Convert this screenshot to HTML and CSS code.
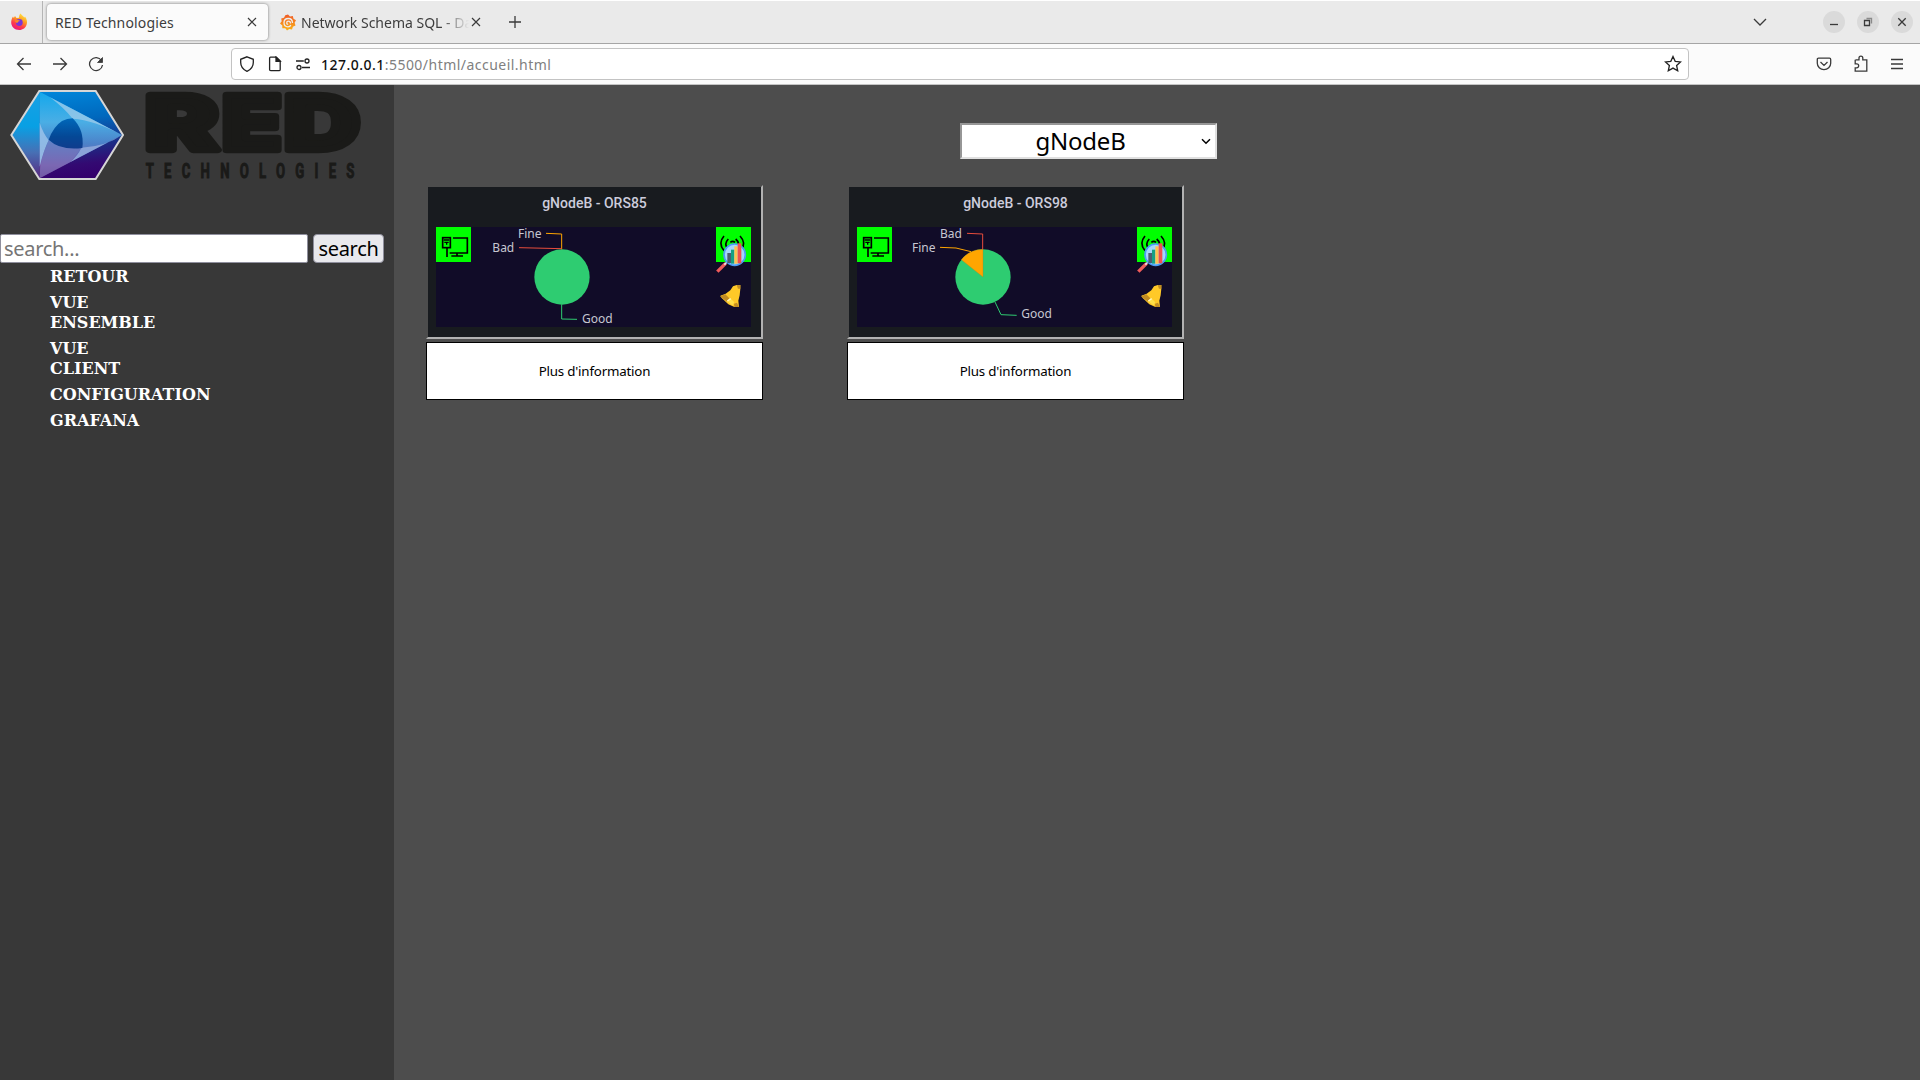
FILE: index.html
```html
<!DOCTYPE html>
<html lang="fr">
<head>
<meta charset="utf-8">
<title>RED Technologies</title>
<link rel="stylesheet" href="styles.css">
</head>
<body>
<svg width="0" height="0" class="defs">
  <defs>
    <g id="pc-icon">
      <rect x="48" y="141" width="105" height="105" fill="#0f0"/>
      <path d="M99 174H142V219H89M81 204V231M111 219V228M94 228H129" fill="none" stroke="#000" stroke-width="5"/>
      <rect x="68" y="173" width="23" height="30" fill="none" stroke="#000" stroke-width="5"/>
      <path d="M71 180H88M73 187H86M80 187V194" fill="none" stroke="#000" stroke-width="4"/>
    </g>
    <g id="radio-icon">
      <rect x="888" y="141" width="105" height="105" fill="#0f0"/>
      <path d="M912 168Q893 190 912 212M925 177Q912 190 922 206M960 168Q981 190 962 212M947 177Q962 190 951 206M931 187q7-6 14 0" fill="none" stroke="#000" stroke-width="5"/>
      <path d="M917 250L892 275" stroke="#f05b5b" stroke-width="10"/>
      <path d="M921 246L913 254" stroke="#e8eaf0" stroke-width="5"/>
      <circle cx="944" cy="224" r="32" fill="#a5d6fb" stroke="#4b9bf5" stroke-width="5"/>
      <path d="M922 219h11v30h-11z" fill="#4d5d70"/>
      <path d="M933 209h10v42h-10z" fill="#16a085"/>
      <path d="M943 199h10v52h-10z" fill="#ffc250"/>
      <path d="M953 190h11v60h-11z" fill="#ef5050"/>
    </g>
    <g id="bell-icon">
      <path d="M950 315h11v11l-2 20-4 16 2 19h-14l-18-8-20-19-4-7 16-6 14-10 8-12z" fill="#ffc928"/>
      <path d="M950 315h11v11h-7zM900 349l16-6 12 12-7 10zM942 371l9-3 6 13h-14z" fill="#c28d22"/>
      <path d="M921 363l10-8 12 12-6 9z" fill="#ffe04a"/>
      <path d="M922 363l10-7" stroke="#fff6c8" stroke-width="4"/>
    </g>
  </defs>
</svg>

<header class="browser">
  <div class="tabbar">
    <div class="pinned">
      <svg width="18" height="18" viewBox="0 0 18 18">
        <defs>
          <linearGradient id="fox" x1=".8" y1="0" x2=".3" y2="1"><stop offset="0" stop-color="#fff04a"/><stop offset=".4" stop-color="#ff9a1f"/><stop offset=".7" stop-color="#ff3b4a"/><stop offset="1" stop-color="#e81580"/></linearGradient>
        </defs>
        <path d="M10.500 0.500C11.500 2 13 3 14.500 4.500L15 3.500C17 6 17.300 9 16.800 11C16 14.800 12.900 17 9.200 17C4.500 17 1.200 13.500 1.200 9.500C1.200 7 2 5 3 3.500L3.800 5L5 3L6.500 5L9 4.800C9 3 9.500 1.500 10.500 .5Z" fill="url(#fox)"/>
        <circle cx="9.300" cy="9.500" r="3.400" fill="#7a35d8"/>
        <path d="M5 7.500C7 6.500 9 7 10 8C8.500 8.500 7.500 8.500 7.500 10C6 10 5 9 5 7.500Z" fill="#ff8b25"/>
      </svg>
    </div>
    <div class="tab active">
      <span class="tab-title t1">RED Technologies</span>
      <svg class="x" width="10" height="10" viewBox="0 0 10 10"><path d="M1 1L9 9M9 1L1 9"/></svg>
    </div>
    <div class="tab second">
      <svg width="16" height="17" viewBox="0 0 16 17">
        <defs><linearGradient id="graf" x1="0" y1="0" x2="0" y2="1"><stop offset="0" stop-color="#f05a28"/><stop offset="1" stop-color="#fbb516"/></linearGradient></defs>
        <path d="M8 .5L10 2.500L12.800 2L13.500 4.800L16 6.300L14.600 8.800L15.500 11.500L12.900 12.800L12 15.500L9.300 14.900L7 16.500L5.300 14.300L2.300 14.200L2.300 11.400L0 9.500L1.700 7.300L1.200 4.500L4 3.800L5.300 1.300Z" fill="url(#graf)"/>
        <path d="M12.500 9C12.500 6 10.500 4.500 8.300 4.500C5.500 4.500 4 6.500 4 8.800C4 11.200 5.800 12.800 8 12.800C9.500 12.800 10.500 12 10.800 11M10.500 9.500C10.500 8 9.500 7.200 8.500 7.200C7.300 7.200 6.700 8 6.700 8.900C6.700 9.800 7.400 10.300 8.200 10.300" fill="none" stroke="#eee" stroke-width="1.300"/>
      </svg>
      <span class="tab-title t2">Network Schema SQL - Da</span>
      <svg class="x" width="10" height="10" viewBox="0 0 10 10"><path d="M1 1L9 9M9 1L1 9"/></svg>
    </div>
    <svg class="plus" width="12" height="12" viewBox="0 0 12 12"><path d="M6 0V12M0 6H12"/></svg>
    <div class="window-controls">
      <svg class="chev" width="14" height="8" viewBox="0 0 14 8"><path d="M1 1L7 7L13 1"/></svg>
      <span class="wc"><svg width="10" height="10" viewBox="0 0 10 10"><path d="M1 7.500H9"/></svg></span>
      <span class="wc"><svg width="10" height="10" viewBox="0 0 10 10"><path d="M1.500 3.500H6.500V8.500H1.500Z"/><path d="M3.500 1.500H8.500V6.500" opacity=".5"/></svg></span>
      <span class="wc"><svg width="10" height="10" viewBox="0 0 10 10"><path d="M1.300 1.300L8.700 8.700M8.700 1.300L1.300 8.700"/></svg></span>
    </div>
  </div>
  <div class="navbar">
    <div class="nav-buttons">
      <svg width="16" height="16" viewBox="0 0 16 16"><path d="M15 8H1.500M7.500 2L1.500 8L7.500 14"/></svg>
      <svg width="16" height="16" viewBox="0 0 16 16"><path d="M1 8H14.500M8.500 2L14.500 8L8.500 14"/></svg>
      <svg width="16" height="16" viewBox="0 0 16 16"><path d="M13.500 4.500A6.500 6.500 0 1 0 14.500 9"/><path d="M14.500 1.500V6.500H9.500Z" fill="#3a3a3a" stroke-width=".8"/></svg>
    </div>
    <div class="urlbar">
      <svg width="16" height="16" viewBox="0 0 16 16"><path d="M8 .8L14.300 3.300V6.500C14.300 10.500 12 13.500 8 15.300C4 13.500 1.700 10.500 1.700 6.500V3.300Z"/></svg>
      <svg width="16" height="16" viewBox="0 0 16 16"><path d="M3.500 1.200H9.300L13.200 5V13.500Q13.200 14.700 12 14.700H3.800Q2.600 14.700 2.600 13.500V2.200Q2.600 1.200 3.500 1.200Z"/><path d="M9 1.200V5.300H13.200Z" fill="#222"/></svg>
      <svg width="16" height="16" viewBox="0 0 16 16"><path d="M1 5H8.800M7 11.500H15"/><circle cx="12" cy="5" r="2"/><circle cx="4" cy="11.500" r="2"/></svg>
      <span class="url"><b>127.0.0.1</b>:5500/html/accueil.html</span>
      <svg class="star" width="18" height="18" viewBox="0 0 18 18"><path d="M9 1.500L11.200 6.300L16.500 6.900L12.600 10.500L13.700 15.800L9 13.100L4.300 15.800L5.400 10.500L1.500 6.900L6.800 6.300Z"/></svg>
    </div>
    <div class="nav-actions">
      <svg width="16" height="16" viewBox="0 0 16 16"><path d="M2.500 2.200H13.500Q14.700 2.200 14.700 3.400V7.300A6.700 6.400 0 0 1 1.300 7.300V3.400Q1.300 2.200 2.500 2.200ZM4.500 6L8 9.400L11.500 6"/></svg>
      <svg width="16" height="18" viewBox="0 0 16 18"><path d="M2.500 4.800H6V3A1.900 1.900 0 0 1 9.800 3V4.800H13.800V16.200H2.200V12.800H3.700A2 2 0 0 0 3.700 8.800H2.200V4.800"/></svg>
      <svg width="14" height="12" viewBox="0 0 14 12"><path d="M1 1.500H13M1 6H13M1 10.500H13"/></svg>
    </div>
  </div>
</header>

<div class="page">
  <aside class="sidebar">
    <svg class="logo" width="394" height="149" viewBox="0 15 1182 447" role="img">
      <defs>
        <linearGradient id="hex" x1=".35" y1="0" x2=".5" y2="1"><stop offset="0" stop-color="#0086da"/><stop offset=".35" stop-color="#0068bd"/><stop offset=".65" stop-color="#1c2d86"/><stop offset=".85" stop-color="#330a72"/><stop offset="1" stop-color="#34006c"/></linearGradient>
        <linearGradient id="left" x1="0" y1="0" x2="0" y2="1"><stop offset="0" stop-color="#18a0e4"/><stop offset=".4" stop-color="#08a0e4"/><stop offset=".7" stop-color="#4770b5"/><stop offset="1" stop-color="#58277f"/></linearGradient>
        <linearGradient id="tri" x1="0" y1="0" x2="0" y2="1"><stop offset="0" stop-color="#12a8ec"/><stop offset=".35" stop-color="#4aaee5"/><stop offset=".6" stop-color="#4c82c9"/><stop offset=".85" stop-color="#7a55a8"/><stop offset="1" stop-color="#69398d"/></linearGradient>
        <linearGradient id="eye" x1="0" y1="0" x2="0" y2="1"><stop offset="0" stop-color="#0068ba"/><stop offset=".6" stop-color="#044896"/><stop offset="1" stop-color="#103c8d"/></linearGradient>
      </defs>
      <path d="M34 165L118 33H287L369 165L287 297H118Z" fill="url(#hex)"/>
      <path d="M36 165L119 35V295Z" fill="url(#left)"/>
      <path d="M119 35L366 165L119 295Z" fill="url(#tri)"/>
      <path d="M150 52Q190 82 218 116Q282 120 366 165Z" fill="#9bc9ea" opacity=".8"/>
      <path d="M366 165Q317 200 244 203Q234 226 211 246Z" fill="#8fa9db" opacity=".9"/>
      <path d="M119 128Q130 161 146 180Q130 214 119 260Z" fill="#9bc3ea" opacity=".85"/>
      <path d="M244 205L211 246L119 295Q118 240 146 180Q170 202 244 205Z" fill="#7c79be" opacity=".5"/>
      <path d="M146 179Q160 140 186 123Q201 115 218 115Q254 150 247 204Q180 212 146 179Z" fill="url(#eye)"/>
      <path d="M34 165L118 33H287L369 165L287 297H118Z" fill="none" stroke="#d6d6d6" stroke-width="6"/>
      <g class="wordmark">
        <text x="436" y="210" textLength="220" lengthAdjust="spacingAndGlyphs">R</text>
        <text x="667" y="210" textLength="178" lengthAdjust="spacingAndGlyphs">E</text>
        <text x="853" y="210" textLength="227" lengthAdjust="spacingAndGlyphs">D</text>
      </g>
      <text class="tagline" transform="translate(437 295) scale(.68 1)" textLength="921">TECHNOLOGIES</text>
    </svg>
    <form class="search">
      <input type="text" placeholder="search...">
      <button type="button">search</button>
    </form>
    <ul class="menu">
      <li>RETOUR</li>
      <li>VUE<br>ENSEMBLE</li>
      <li>VUE<br>CLIENT</li>
      <li>CONFIGURATION</li>
      <li>GRAFANA</li>
    </ul>
  </aside>

  <main class="content">
    <div class="picker">
      <span class="picker-value">gNodeB</span>
      <svg width="10" height="7" viewBox="0 0 10 7"><path d="M1 1.200L5 5.200L9 1.200"/></svg>
    </div>
    <div class="cards">
      <section class="card">
        <div class="frame">
          <h2>gNodeB - ORS85</h2>
          <svg class="chart" width="315" height="100" viewBox="48 141 945 300">
            <use href="#pc-icon"/>
            <circle cx="426" cy="291" r="83" fill="#2ecc71"/>
            <path d="M378 160L425 162V208" stroke="#ffa500"/>
            <path d="M297 203L425 206" stroke="#e74c3c"/>
            <path d="M425 373V417L471 418" stroke="#2ecc71"/>
            <text x="294" y="174">Fine</text>
            <text x="217" y="216">Bad</text>
            <text x="486" y="429">Good</text>
            <use href="#radio-icon"/>
            <use href="#bell-icon"/>
          </svg>
        </div>
        <button type="button" class="more">Plus d'information</button>
      </section>
      <section class="card">
        <div class="frame">
          <h2>gNodeB - ORS98</h2>
          <svg class="chart" width="315" height="100" viewBox="48 141 945 300">
            <use href="#pc-icon"/>
            <circle cx="426" cy="291" r="83" fill="#2ecc71"/>
            <path class="slice" d="M426 291L361 239A83 83 0 0 1 426 208Z"/>
            <path d="M378 160L425 162V208" stroke="#e74c3c"/>
            <path d="M297 202L345 204L390 215" stroke="#ffa500"/>
            <path d="M462 366L480 404L527 406" stroke="#2ecc71"/>
            <text x="297" y="174">Bad</text>
            <text x="213" y="216">Fine</text>
            <text x="541" y="414">Good</text>
            <use href="#radio-icon"/>
            <use href="#bell-icon"/>
          </svg>
        </div>
        <button type="button" class="more">Plus d'information</button>
      </section>
    </div>
  </main>
</div>
</body>
</html>
```
FILE: styles.css
```css
* { box-sizing: border-box; }
html, body { height: 100%; }
body {
  margin: 0;
  display: flex;
  flex-direction: column;
  overflow: hidden;
  background: #4d4d4d;
  font-family: "Noto Sans", "Open Sans", sans-serif;
}
svg { display: block; flex: none; }
.defs { position: absolute; }

/* browser window */
.browser { flex: none; height: 85px; border-bottom: 1px solid #c4c4c4; background: #fbfbfb; }
.browser svg { fill: none; stroke: #3a3a3a; stroke-width: 1.3; }
.browser .pinned svg, .browser .second > svg:first-child { stroke: none; }
.tabbar {
  display: flex;
  align-items: center;
  height: 44px;
  background: #eaeaea;
  border-top: 1px solid #fff;
  border-bottom: 1px solid #a5a5a5;
}
.pinned {
  display: flex;
  align-items: center;
  width: 43px;
  height: 100%;
  padding-left: 10px;
  border-right: 1px solid #b5b5b5;
}
.tab { display: flex; align-items: center; height: 36px; color: #3d3d3d; font-size: 14px; white-space: nowrap; }
.tab.active {
  width: 221px;
  margin-left: 4px;
  padding: 0 11px 0 8px;
  justify-content: space-between;
  background: #fbfbfb;
  border-radius: 4px;
  box-shadow: 0 0 3px rgba(0, 0, 0, .5);
}
.tab.second { width: 203px; margin-left: 12px; }
.tab .x { stroke-width: 1.2; }
.t1 { letter-spacing: .15px; }
.t2 {
  width: 169px;
  margin: 0 1px 0 5px;
  overflow: hidden;
  -webkit-mask-image: linear-gradient(to right, #000 140px, transparent 168px);
  mask-image: linear-gradient(to right, #000 140px, transparent 168px);
}
.plus { margin-left: 26px; }
.window-controls { display: flex; align-items: center; margin: 0 7px 0 auto; gap: 12px; }
.chev { margin-right: 44px; }
.wc { display: flex; align-items: center; justify-content: center; width: 22px; height: 22px; border-radius: 50%; background: #dadada; }
.navbar { display: flex; align-items: center; height: 40px; }
.nav-buttons { display: flex; gap: 20px; width: 231px; padding-left: 16px; }
.urlbar {
  display: flex;
  align-items: center;
  gap: 12px;
  width: 1458px;
  height: 32px;
  padding: 0 6px 0 7px;
  background: #fff;
  border: 1px solid #c3c3c3;
  border-radius: 4px;
}
.browser .urlbar svg { stroke: #222; }
.url { margin-left: -2px; color: #808080; font-size: 14px; letter-spacing: .47px; }
.url b { color: #111; font-weight: 500; }
.star { margin-left: auto; }
.nav-actions { display: flex; align-items: center; gap: 21px; margin: 0 16px 0 auto; }

/* site */
.page { display: flex; flex: 1; min-height: 0; }
.sidebar { width: 394px; background: #383838; }
.logo { overflow: visible; }
.wordmark { font: 900 226px Inter, sans-serif; fill: #1a1a18; stroke: #1a1a18; stroke-width: 20; stroke-linejoin: round; }
.tagline { font: 700 58px Roboto, sans-serif; fill: #1a1a18; stroke: #1a1a18; stroke-width: 3; }
.search { display: flex; gap: 5px; height: 29px; }
.search input, .search button { font: 20px "Noto Sans", sans-serif; border: 1px solid #8f8f9d; }
.search input { width: 308px; padding: 0 3px; background: #fff; border-radius: 2px; letter-spacing: -.3px; }
.search input::placeholder { color: #757575; }
.search button { width: 71px; padding: 0; background: #e9e9ed; border-radius: 4px; color: #000; line-height: 24px; letter-spacing: -.3px; }
.menu { margin: 4px 0 0; padding: 0 0 0 50px; list-style: none; }
.menu li { margin-bottom: 6px; color: #fff; font: bold 16px/20px "DejaVu Serif", serif; }

.content { flex: 1; padding: 38px 0 0 32px; }
.picker {
  display: flex;
  align-items: center;
  width: 257px;
  height: 36px;
  margin-left: 534px;
  padding-right: 4px;
  background: #fff;
  border: 2px solid;
  border-color: #969696 #e0e0e0 #e0e0e0 #969696;
}
.picker-value { flex: 1; padding-right: 2px; color: #000; font-size: 24px; line-height: 30px; text-align: center; letter-spacing: -.2px; }
.picker svg { fill: none; stroke: #000; stroke-width: 1.5; }
.cards { display: flex; gap: 84px; margin-top: 26px; }
.card { width: 337px; }
.frame {
  height: 154px;
  padding: 7px 8px 0;
  background: #181b1f;
  border: 2px solid;
  border-color: #4d4d4d #b2b2b2 #b2b2b2 #4d4d4d;
}
.frame h2 { height: 33px; margin: 0; color: #ccccdc; font: 500 14px/18px Roboto, sans-serif; text-align: center; }
.chart { background: #110c28; }
.chart path { stroke-width: 3; }
.chart > path { fill: none; }
.chart > .slice { fill: #ffa500; stroke: #ad8420; stroke-width: 1; }
.chart text { fill: #c7c7d1; font: 36px "Noto Sans", sans-serif; }
.more {
  display: block;
  width: 337px;
  height: 58px;
  margin-top: 3px;
  padding: 0;
  background: #fff;
  border: 1px solid #000;
  color: #000;
  font: 13.333px "Noto Sans", sans-serif;
  letter-spacing: -.2px;
}
```
